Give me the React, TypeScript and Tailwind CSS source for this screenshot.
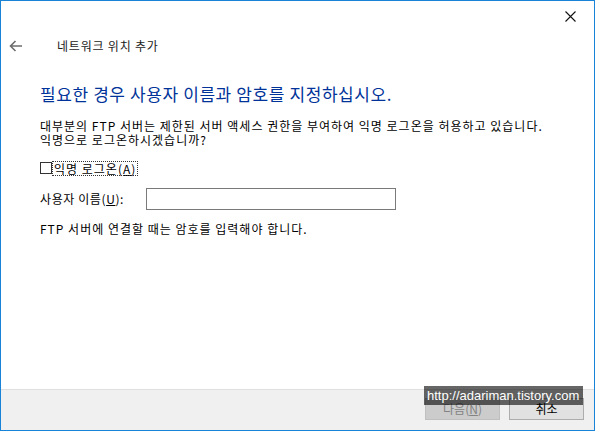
import React from 'react';

const font = { fontFamily: '"Noto Sans CJK KR", "Noto Sans", sans-serif' };

const App: React.FC = () => {
  return (
    <div className="w-[595px] h-[431px] bg-white border border-[#1883d7] flex flex-col relative text-[#000]" style={font}>
      {/* title bar */}
      <div className="h-[30px] flex justify-end items-start">
        <div className="w-[46px] h-[30px] flex items-center justify-center mr-[1px]">
          <svg width="11" height="11" viewBox="0 0 11 11">
            <path d="M0.5 0.5 L10.5 10.5 M10.5 0.5 L0.5 10.5" stroke="#111" strokeWidth="1.1" />
          </svg>
        </div>
      </div>

      {/* header */}
      <div className="h-[30px] flex items-center">
        <div className="w-[56px] pl-[8px] flex items-center">
          <svg width="14" height="12" viewBox="0 0 14 12">
            <path d="M6.5 1 L1.5 6 L6.5 11 M1.5 6 L13 6" stroke="#6d6d6d" strokeWidth="1.6" fill="none" />
          </svg>
        </div>
        <span className="text-[12px] leading-none text-[#1a1a1a] tracking-[0.8px]">네트워크 위치 추가</span>
      </div>

      {/* content */}
      <div className="pl-[39px] flex flex-col">
        <h1 className="mt-[23px] text-[17px] leading-[20px] text-[#003399] tracking-[0.6px]">
          필요한 경우 사용자 이름과 암호를 지정하십시오.
        </h1>
        <p className="mt-[15px] text-[12px] leading-[14px] tracking-[1px]">
          대부분의 FTP 서버는 제한된 서버 액세스 권한을 부여하여 익명 로그온을 허용하고 있습니다.
          <br />
          익명으로 로그온하시겠습니까?
        </p>
        <label className="mt-[14px] flex items-center h-[14px]">
          <span className="w-[12px] h-[12px] border border-[#333] bg-white" />
          <span className="ml-[1px] text-[12px] leading-[13px] tracking-[1px] outline outline-1 outline-dotted outline-[#333] px-[1px]">
            익명 로그온(<span className="underline">A</span>)
          </span>
        </label>
        <div className="mt-[13px] flex items-center">
          <span className="w-[106px] text-[12px] leading-none tracking-[0.6px]">
            사용자 이름(<span className="underline">U</span>):
          </span>
          <div className="w-[250px] h-[22px] border border-[#7a7a7a] bg-white" />
        </div>
        <p className="mt-[13px] text-[12px] leading-none tracking-[1px]">FTP 서버에 연결할 때는 암호를 입력해야 합니다.</p>
      </div>

      {/* footer */}
      <div className="mt-auto h-[41px] border-t border-[#dfdfdf] bg-[#f0f0f0] flex justify-end items-start pt-[8px] pr-[10px] gap-[9px]">
        <button className="w-[75px] h-[22px] border border-[#bfbfbf] bg-[#cccccc] text-[12px] text-[#838383] leading-none">
          다음(<span className="underline">N</span>)
        </button>
        <button className="w-[75px] h-[22px] border border-[#adadad] bg-[#e1e1e1] text-[12px] leading-none">
          취소
        </button>
      </div>

      {/* watermark */}
      <div
        className="absolute left-[423px] top-[385px] w-[159px] h-[19px] bg-black/60 text-white text-[13px] leading-[19px] pl-[3px]"
        style={{ fontFamily: '"Liberation Sans", Arial, sans-serif' }}
      >
        http://adariman.tistory.com
      </div>
    </div>
  );
};

export default App;
